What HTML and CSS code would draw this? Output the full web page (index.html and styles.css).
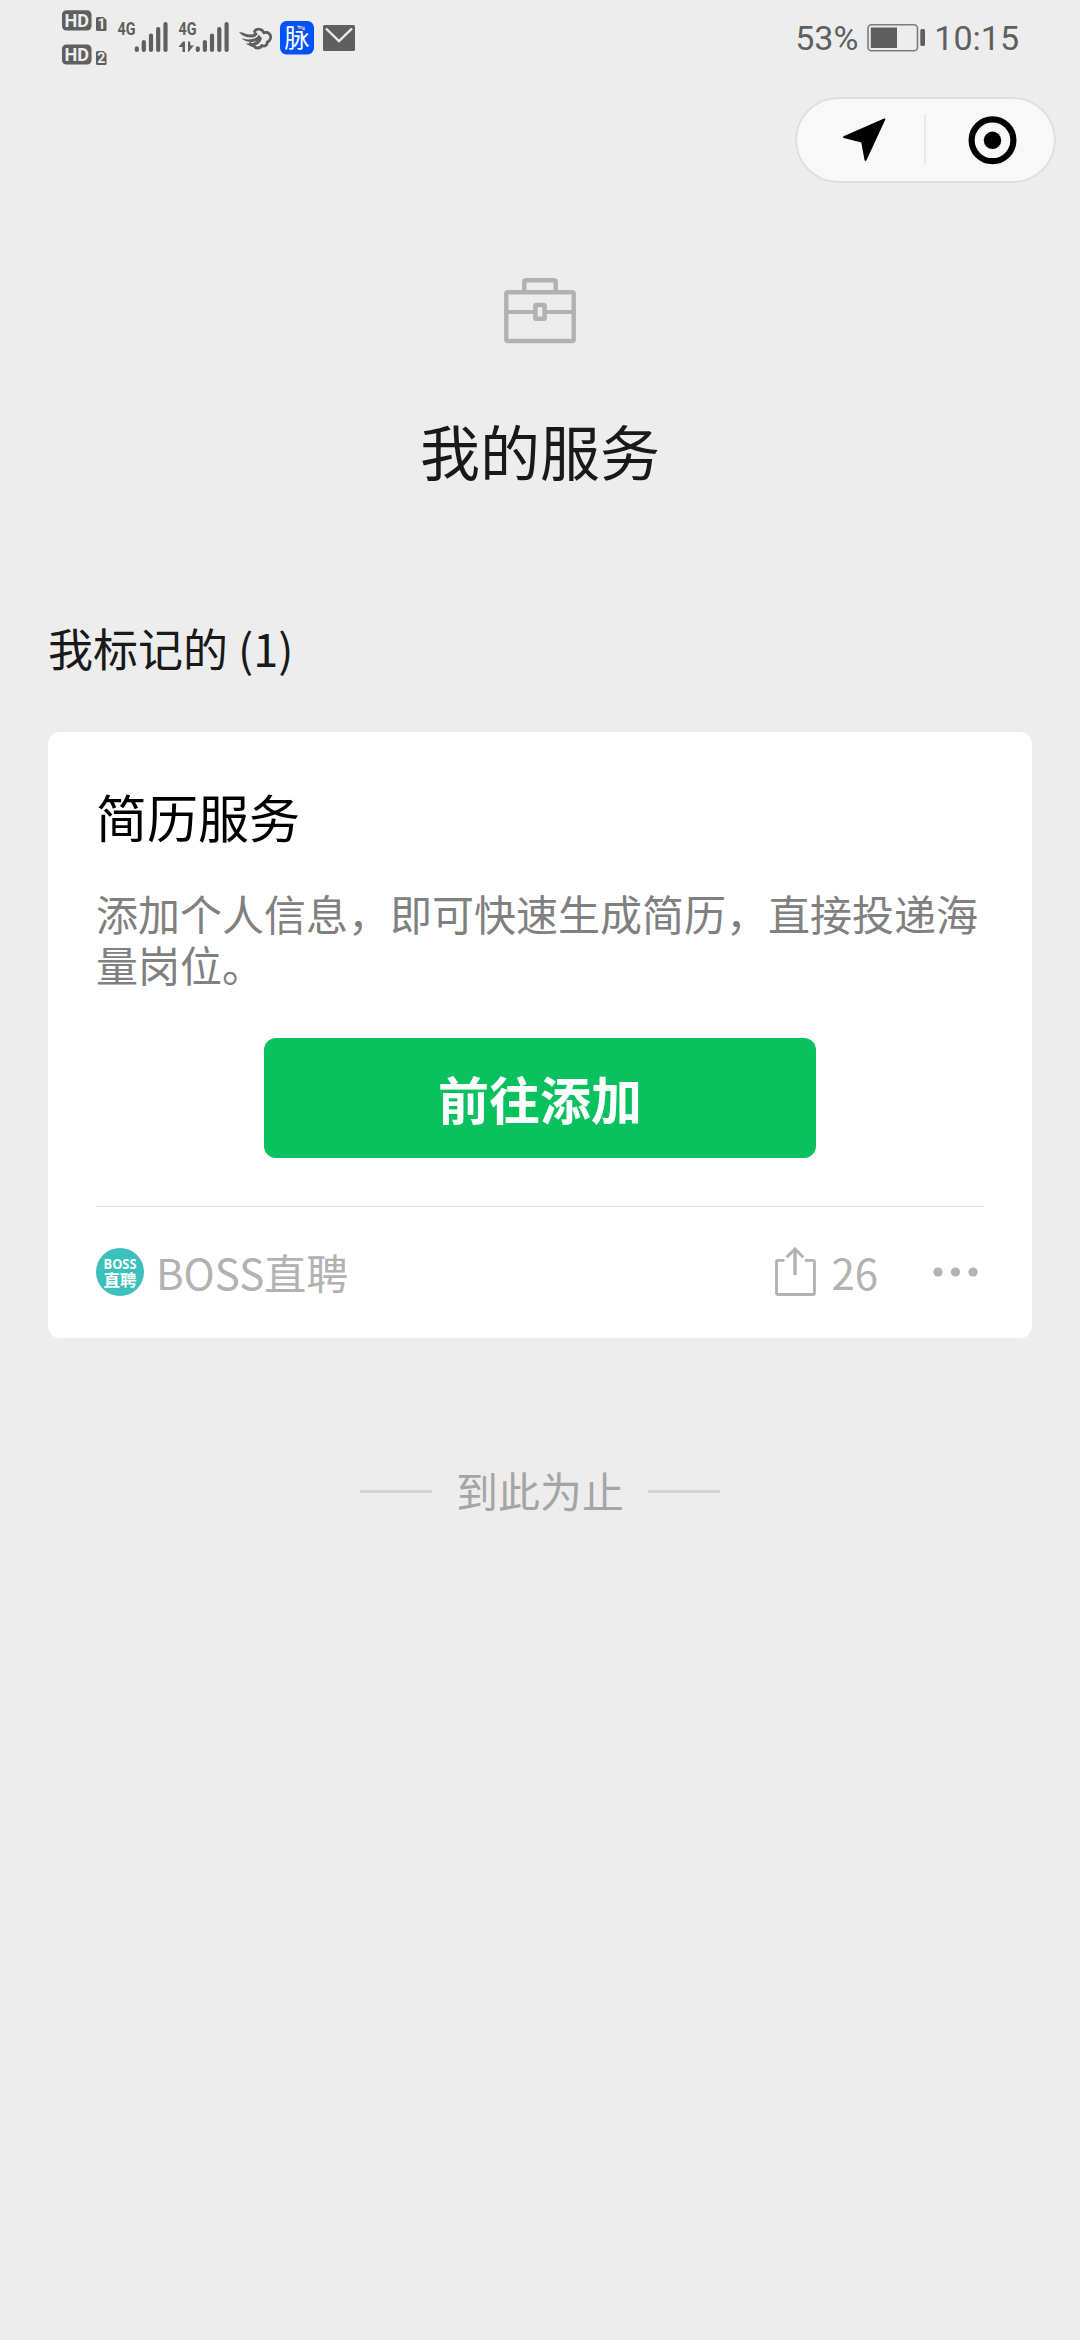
FILE: index.html
```html
<!DOCTYPE html>
<html lang="zh-CN">
<head>
<meta charset="utf-8">
<title>我的服务</title>
<link rel="stylesheet" href="styles.css">
</head>
<body>
<header class="status">
  <svg class="status-icons" width="300" height="76" viewBox="60 0 300 76">
    <g class="dark">
      <rect x="62" y="10.300" width="29.500" height="20.200" rx="4.500"/>
      <rect x="62" y="44.400" width="29.500" height="20.200" rx="4.500"/>
      <path d="M97.500 17h6l3 3v10a1 1 0 0 1-1 1h-8a1.500 1.500 0 0 1-1.500-1.500v-11a1.500 1.500 0 0 1 1.500-1.500z"/>
      <path d="M97.500 51h6l3 3v10a1 1 0 0 1-1 1h-8a1.500 1.500 0 0 1-1.500-1.500v-11a1.500 1.500 0 0 1 1.500-1.500z"/>
      <text class="net" x="117.500" y="35.300" textLength="18" lengthAdjust="spacingAndGlyphs">4G</text>
      <text class="net" x="178.500" y="35.300" textLength="18" lengthAdjust="spacingAndGlyphs">4G</text>
      <path d="M183 41.500h2v10.500h-2.500v-5h-4zM188 41.500h2l.5 4h3.500l-5.500 6.500h-.5z"/>
    </g>
    <g class="badge-text">
      <text x="64.500" y="27" textLength="24.500" lengthAdjust="spacingAndGlyphs">HD</text>
      <text x="64.500" y="61.100" textLength="24.500" lengthAdjust="spacingAndGlyphs">HD</text>
      <text class="sim" x="97.500" y="29.200">1</text>
      <text class="sim" x="97.200" y="63.200">2</text>
    </g>
    <path class="bars" d="M136.800 48.400v1.600M143.800 42v8M151 35.500v14.500M158.200 29v21M165.500 24v26M197.800 48.400v1.600M204.900 42v8M212 35.500v14.500M219.300 29v21M226.600 24v26"/>
    <path class="cloud" d="M254.500 31.500c1.500-3.300 7.500-3.300 9.300 1.300 4.400-1.300 7.600 1.500 6.700 5.700-.5 2-1.700 3-3.300 3.600.3 3.200-2.500 4.800-5.400 3.400-1.800 3.300-6.400 3.300-7.800.3-1.800 0-3.200-.8-3.800-2.300"/>
    <path class="dark" d="M239 32.300c4-.6 6.500 2.200 11.500 2.200 2.500 0 4-.8 4.500-2.500l2.600 1.200c-.8 3.600-3.800 4.600-7.600 4.400-5-.3-8-2-11-5.300zM241.500 38c4 2 10 1.600 13.500.2 2-.9 3-2 3.500-3.400l2 1.400c-1 3.600-4.300 5.500-9 5.800-4 .2-7.600-1.200-10-4zM245.500 43.200c5 .7 8.500-.2 11.300-2.400 1.500-1.200 2.300-2.600 2.900-4l2.300 1c-.8 3.800-3.200 7-7.500 7.900-3.600.7-7-.6-9-2.500z"/>
    <rect class="app" x="280" y="21" width="34" height="33.500" rx="6.500"/>
    <text class="app-text" x="284.500" y="47" textLength="25" lengthAdjust="spacingAndGlyphs">脉</text>
    <rect x="298" y="26.500" width="7" height="2.500" fill="#8f95b5"/>
    <rect class="dark" x="323" y="25" width="32" height="26" rx="1.500"/>
    <path class="flap" d="M326 28.500 339 41l13-12.500"/>
  </svg>
  <div class="status-right">
    <span class="percent">53%</span>
    <svg class="battery" width="60" height="28" viewBox="0 0 60 28">
      <rect x="1" y=".8" width="49.500" height="26" rx="3.500" fill="none" stroke="#7c7c7c" stroke-width="1.600"/>
      <rect x="3.800" y="3.500" width="26.200" height="20.500" fill="#5f5f5f"/>
      <rect x="53.300" y="5" width="4.700" height="17" rx="1.500" fill="#5f5f5f"/>
    </svg>
    <span class="clock">10:15</span>
  </div>
</header>

<nav class="capsule">
  <svg width="260" height="86" viewBox="795.500 97 260 86">
    <path d="M884.600 118.500 844 136.200q-1.300 1 .3 1.800L861.800 142.500 865 160q1 1.800 2.100 0L885.800 119.500q.2-1.500-1.200-1z" fill="#000"/>
    <path d="M925.500 114v51" stroke="#d9d9d9" stroke-width="1"/>
    <circle cx="993" cy="140.300" r="20.900" fill="none" stroke="#000" stroke-width="6.200"/>
    <circle cx="993" cy="140.300" r="8.700" fill="#000"/>
  </svg>
</nav>

<main>
  <section class="hero">
    <svg width="72" height="66" viewBox="504 278 72 66" fill="none" stroke="#b2b2b2">
      <rect x="506.300" y="292.200" width="67.400" height="48.800" rx="1.500" stroke-width="4.400"/>
      <path d="M524.300 291v-9q0-1.700 1.700-1.700h28q1.700 0 1.700 1.700v9" stroke-width="4.500"/>
      <path d="M506 312h28M546 312h28" stroke-width="4"/>
      <rect x="535.400" y="305" width="9.200" height="13.800" rx=".8" stroke-width="4.600"/>
    </svg>
    <h1>我的服务</h1>
  </section>

  <h2 class="section-title">我标记的 (1)</h2>

  <article class="card">
    <h3>简历服务</h3>
    <p>添加个人信息，即可快速生成简历，直接投递海量岗位。</p>
    <button class="action" type="button">前往添加</button>
    <footer class="card-footer">
      <svg class="avatar" width="48" height="48" viewBox="0 0 48 48">
        <circle cx="24" cy="24" r="24" fill="#3cc0bb"/>
        <text class="avatar-top" x="7.500" y="20.700" textLength="33" lengthAdjust="spacingAndGlyphs">BOSS</text>
        <text class="avatar-bottom" x="7.500" y="37.800" textLength="33" lengthAdjust="spacingAndGlyphs">直聘</text>
      </svg>
      <span class="brand">BOSS直聘</span>
      <svg class="share" width="42" height="50" viewBox="0 0 42 50" fill="none" stroke="#b2b2b2" stroke-width="3">
        <path d="M10.500 13.300H4q-1.500 0-1.500 1.500V46q0 1.500 1.500 1.500h35q1.500 0 1.500-1.500V14.800q0-1.500-1.500-1.500h-8" stroke-width="2.800"/>
        <path d="M21 28V3"  stroke-width="3.400"/>
        <path d="M12.700 10.300 21 2l8.300 8.300"/>
      </svg>
      <span class="count">26</span>
      <svg width="46" height="10" viewBox="0 0 46 10" fill="#b2b2b2">
        <circle cx="5" cy="5" r="4.600"/><circle cx="22.500" cy="5" r="4.600"/><circle cx="40" cy="5" r="4.600"/>
      </svg>
    </footer>
  </article>

  <div class="end"><span>到此为止</span></div>
</main>
</body>
</html>
```

FILE: styles.css
```css
* { box-sizing: border-box; margin: 0; padding: 0; }
body {
  background: #ededed;
  color: #191919;
  min-height: 2340px;
  font-family: "Noto Sans CJK SC", sans-serif;
}
svg { display: block; flex: none; }
h1, h2, h3 { font-weight: 400; white-space: nowrap; }

.status {
  display: flex;
  justify-content: space-between;
  height: 76px;
  padding: 0 61px 0 60px;
}
.status-right {
  display: flex;
  align-items: center;
  height: 76px;
  color: #5f5f5f;
  font: 34px/40px Roboto, sans-serif;
}
.battery { margin: 0 7px 0 9px; }
.dark { fill: #5f5f5f; }
.net { font: 700 18.500px Roboto, sans-serif; }
.badge-text { fill: #ededed; font: 700 18px Roboto, sans-serif; }
.badge-text .sim { font-size: 14px; }
.bars { fill: none; stroke: #5f5f5f; stroke-width: 4.2; stroke-linecap: round; }
.cloud { fill: none; stroke: #5f5f5f; stroke-width: 2.8; stroke-linecap: round; stroke-linejoin: round; }
.app { fill: #0052ff; }
.app-text { fill: #fff; font: 400 25px "Noto Sans CJK SC", sans-serif; }
.flap { fill: none; stroke: #ededed; stroke-width: 2.4; }

.capsule {
  width: 261px;
  height: 86px;
  margin: 21px 24px 0 auto;
  border-radius: 43px;
  background: #f8f8f8;
  box-shadow: inset 0 0 0 2px #dedede;
}

.hero {
  display: flex;
  flex-direction: column;
  align-items: center;
  padding-top: 95px;
}
.hero h1 { margin-top: 64px; font-size: 60px; line-height: 84px; }

.section-title {
  margin: 126px 48px 0;
  font-size: 45px;
  line-height: 60px;
}

.card {
  height: 606px;
  margin: 54px 48px 0;
  padding: 48px 48px 0;
  border-radius: 12px;
  background: #fff;
}
.card h3 { color: #000; font-size: 51px; line-height: 72px; }
.card p { margin-top: 35px; color: #808080; font-size: 42px; line-height: 51px; }
.action {
  display: block;
  width: 552px;
  height: 120px;
  margin: 49px auto 0;
  padding-bottom: 1px;
  border: 0;
  border-radius: 12px;
  background: #0ac160;
  color: #fff;
  font: 700 51px/72px "Noto Sans CJK SC", sans-serif;
}
.card-footer {
  display: flex;
  align-items: center;
  height: 131px;
  margin-top: 48px;
  padding-right: 5px;
  border-top: 1px solid #e2e2e2;
  color: #b2b2b2;
  font-size: 42px;
  line-height: 60px;
}
.avatar { margin-right: 12px; }
.avatar text { fill: #fff; }
.avatar-top { font: 700 13.5px "Open Sans", sans-serif; }
.avatar-bottom { font: 700 16px "Noto Sans CJK SC", sans-serif; }
.brand, .count { padding-bottom: 1px; }
.share { margin-left: auto; }
.count { margin: 0 55px 0 15px; }

.end {
  display: flex;
  align-items: center;
  justify-content: center;
  gap: 24px;
  margin-top: 124px;
  color: #a5a5a5;
  font-size: 42px;
  line-height: 60px;
}
.end span { margin-top: -2px; }
.end::before, .end::after { content: ""; width: 72px; height: 3px; background: #d4d4d4; }
```
